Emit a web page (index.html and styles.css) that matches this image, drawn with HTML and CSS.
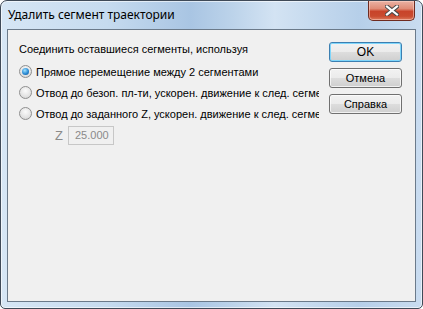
FILE: index.html
```html
<!DOCTYPE html>
<html lang="ru">
<head>
  <meta charset="UTF-8"/>
  <title>Удалить сегмент траектории</title>
  <link rel="stylesheet" href="styles.css">
</head>
<body>
  <div class="window">
    <div class="titlebar">
      <span class="title">Удалить сегмент траектории</span>
      <button class="close" aria-label="Закрыть">
        <svg width="14" height="11" viewBox="0 0 14 11">
          <path d="M2 1.5 L12 9.5 M12 1.5 L2 9.5" stroke="#4a4a4a" stroke-width="4.2" stroke-linecap="square"/>
          <path d="M2 1.5 L12 9.5 M12 1.5 L2 9.5" stroke="#fff" stroke-width="2.2" stroke-linecap="square"/>
        </svg>
      </button>
    </div>
    <div class="client">
      <div class="options">
        <div class="caption">Соединить оставшиеся сегменты, используя</div>
        <label class="radio-row"><span class="radio checked"></span><span class="label">Прямое перемещение между 2 сегментами</span></label>
        <label class="radio-row"><span class="radio"></span><span class="label">Отвод до безоп. пл-ти, ускорен. движение к след. сегменту</span></label>
        <label class="radio-row"><span class="radio"></span><span class="label">Отвод до заданного Z, ускорен. движение к след. сегменту</span></label>
        <div class="z-row">
          <span class="z-label">Z</span>
          <span class="z-input">25.000</span>
        </div>
      </div>
      <div class="buttons">
        <button class="btn default">OK</button>
        <button class="btn">Отмена</button>
        <button class="btn">Справка</button>
      </div>
    </div>
  </div>
</body>
</html>
```

FILE: styles.css
```css
body{margin:0;background:#fff;}
.window{width:423px;height:309px;box-sizing:border-box;border:1px solid #3f4a58;border-radius:7px 7px 5px 5px;padding:0 6px 6px 6px;display:flex;flex-direction:column;
  background:linear-gradient(90deg,#d6e6f5 0%,#c6dbef 25%,#a9c5e3 45%,#bcd3ea 55%,#d3e3f3 65%,#b6cfe9 85%,#c9dcf0 100%);
  box-shadow:inset 0 0 0 1px rgba(255,255,255,.6);}
.titlebar{height:28px;display:flex;align-items:flex-start;justify-content:space-between;}
.title{font-family:"Noto Sans","Open Sans",sans-serif;font-size:12px;color:#000;margin:6px 0 0 1px;line-height:16px;}
.close{width:47px;height:20px;margin:0 1px 0 0;border:1px solid #6e2b20;border-top:none;border-radius:0 0 5px 5px;padding:0;display:flex;align-items:center;justify-content:center;
  background:linear-gradient(#eab2a4 0%,#e08c77 40%,#c8442a 55%,#c94b2f 80%,#dc7a5c 100%);box-shadow:inset 0 0 0 1px rgba(255,220,210,.5);}
.client{flex:1;border:1px solid #6b7a8a;background:#f0f0f0;display:flex;font-family:"Liberation Sans",Arial,sans-serif;font-size:11px;color:#000;}
.options{width:300px;overflow:hidden;white-space:nowrap;padding:13px 0 0 11px;}
.caption{line-height:13px;margin-bottom:5px;}
.radio-row{display:flex;align-items:center;height:21px;}
.radio{width:11px;height:11px;border:1px solid #8f8f8f;border-radius:50%;margin:0 4px 0 0;flex:none;
  background:radial-gradient(circle at 50% 35%,#fbfbfb 0%,#e3e3e3 60%,#cfcfcf 100%);position:relative;}
.radio.checked::after{content:"";position:absolute;left:2px;top:2px;width:7px;height:7px;border-radius:50%;
  background:radial-gradient(circle at 40% 35%,#9fe2ff 0%,#2a8ad4 55%,#0d4f8c 100%);}
.z-row{display:flex;align-items:center;margin:0 0 0 36px;height:22px;}
.z-label{color:#8a8a8a;font-size:13px;width:13px;}
.z-input{width:38px;height:17px;border:1px solid #c7c7c7;background:#f0f0f0;color:#8a8a8a;line-height:17px;padding-left:6px;}
.buttons{display:flex;flex-direction:column;gap:6px;margin:12px 0 0 10px;}
.btn{width:73px;height:20px;border:1px solid #707070;border-radius:3px;font-family:"Liberation Sans",Arial,sans-serif;font-size:11px;color:#000;padding:0;
  background:linear-gradient(#f2f2f2 0%,#ebebeb 50%,#dddddd 51%,#cfcfcf 100%);box-shadow:inset 0 0 0 1px rgba(255,255,255,.7);}
.btn.default{border-color:#3c7fb1;box-shadow:inset 0 0 0 1px #7fd6fb;font-size:12px;}
```
